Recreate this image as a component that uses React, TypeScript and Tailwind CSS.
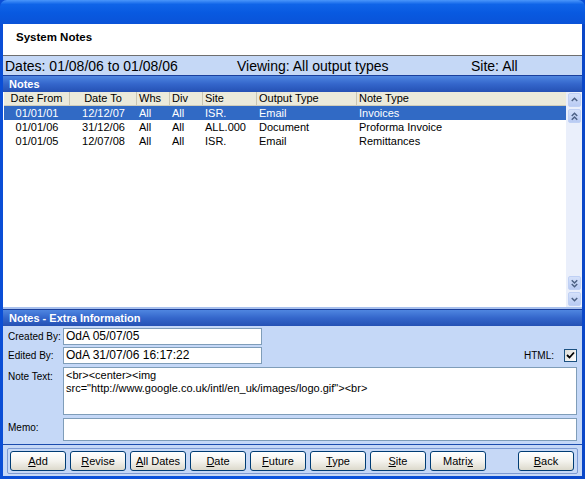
import React from 'react';

type Row = { from: string; to: string; whs: string; div: string; site: string; out: string; note: string };

const rows: Row[] = [
    { from: '01/01/01', to: '12/12/07', whs: 'All', div: 'All', site: 'ISR.', out: 'Email', note: 'Invoices' },
    { from: '01/01/06', to: '31/12/06', whs: 'All', div: 'All', site: 'ALL.000', out: 'Document', note: 'Proforma Invoice' },
    { from: '01/01/05', to: '12/07/08', whs: 'All', div: 'All', site: 'ISR.', out: 'Email', note: 'Remittances' },
];

const cols = 'grid grid-cols-[66px_67px_33px_33px_54px_100px_1fr]';

function Chevron({ dir, double }: { dir: 'up' | 'down'; double?: boolean }) {
    const one = dir === 'up' ? 'M3 7 L6 4 L9 7' : 'M3 5 L6 8 L9 5';
    return (
        <svg width="12" height={double ? 13 : 12} viewBox={double ? '0 0 12 13' : '0 0 12 12'}>
            {double ? (
                <g fill="none" stroke="#4d6185" strokeWidth="1.6">
                    <path d={dir === 'up' ? 'M3 6 L6 3 L9 6' : 'M3 3 L6 6 L9 3'} />
                    <path d={dir === 'up' ? 'M3 10 L6 7 L9 10' : 'M3 7 L6 10 L9 7'} />
                </g>
            ) : (
                <path d={one} fill="none" stroke="#4d6185" strokeWidth="1.6" />
            )}
        </svg>
    );
}

function ScrollBtn({ dir, double }: { dir: 'up' | 'down'; double?: boolean }) {
    return (
        <div className="w-[13px] h-[14px] rounded-[2px] bg-gradient-to-b from-[#d5e1fa] to-[#b9cbf3] border border-[#bfd0f4] flex items-center justify-center">
            <Chevron dir={dir} double={double} />
        </div>
    );
}

function Btn({ pre = '', u, post = '', className = '' }: { pre?: string; u: string; post?: string; className?: string }) {
    return (
        <button className={`w-[56px] h-[20px] rounded-[3px] border border-[#003c74] bg-gradient-to-b from-[#ffffff] via-[#f4f3ee] to-[#dcd9cc] text-[11px] text-black leading-none flex items-center justify-center ${className}`}>
            <span>
                {pre}
                <span className="underline underline-offset-[1px]">{u}</span>
                {post}
            </span>
        </button>
    );
}

function Bar({ title }: { title: string }) {
    return (
        <div className="h-[17px] border-t border-[#1a3f9c] bg-gradient-to-b from-[#4f86e0] via-[#3466cb] to-[#2551b4] px-[6px] flex items-center">
            <span className="text-white font-bold text-[11px] leading-none">{title}</span>
        </div>
    );
}

export default function App() {
    return (
        <div className="w-[585px] h-[479px] overflow-hidden flex flex-col font-['Liberation_Sans',Arial,sans-serif] bg-[#0a4ed6]">
            {/* title bar */}
            <div className="h-[24px] shrink-0 rounded-t-[7px] bg-[linear-gradient(to_bottom,#4a96fb,#0f64e8_18%,#0859e0_55%,#0a53d8)]" />

            <div className="flex-1 flex flex-col px-[3px] pb-[3px] bg-gradient-to-r from-[#0a4ed6] via-[#0b55df] to-[#0a47c8]">
                <div className="h-[31px] bg-white pl-[13px] pt-[7px]">
                    <div className="text-[11.5px] font-bold text-black leading-[12px]">System Notes</div>
                </div>

                <div className="h-[20px] border-t border-[#6f6f6f] bg-[#c5d8f6] flex items-center pl-[2px] text-[14px] text-black leading-none">
                    <span className="w-[232px]">Dates: 01/08/06 to 01/08/06</span>
                    <span className="w-[234px]">Viewing: All output types</span>
                    <span>Site: All</span>
                </div>

                <Bar title="Notes" />

                {/* list */}
                <div className="h-[215px] bg-white flex pl-[1px]">
                    <div className="flex-1 flex flex-col">
                        <div className={`${cols} h-[14px] bg-[#ebeadb] border-b border-[#d0cdba] text-[11px] leading-[13px] text-black`}>
                            <div className="text-center border-r border-[#c9c6b3]">Date From</div>
                            <div className="text-center border-r border-[#c9c6b3]">Date To</div>
                            <div className="pl-[2px] border-r border-[#c9c6b3]">Whs</div>
                            <div className="pl-[2px] border-r border-[#c9c6b3]">Div</div>
                            <div className="pl-[2px] border-r border-[#c9c6b3]">Site</div>
                            <div className="pl-[2px] border-r border-[#c9c6b3]">Output Type</div>
                            <div className="pl-[2px]">Note Type</div>
                        </div>
                        {rows.map((r, i) => (
                            <div
                                key={r.from}
                                className={`${cols} h-[14px] text-[11px] leading-[14px] ${i === 0 ? 'bg-[#316ac5] text-white' : 'text-black'}`}
                            >
                                <div className="text-center">{r.from}</div>
                                <div className="text-center">{r.to}</div>
                                <div className="pl-[2px]">{r.whs}</div>
                                <div className="pl-[2px]">{r.div}</div>
                                <div className="pl-[2px]">{r.site}</div>
                                <div className="pl-[2px]">{r.out}</div>
                                <div className="pl-[2px]">{r.note}</div>
                            </div>
                        ))}
                    </div>
                    <div className="w-[16px] bg-[#eaeffb] flex flex-col items-center pt-[1px] pb-[1px] gap-[2px]">
                        <ScrollBtn dir="up" />
                        <ScrollBtn dir="up" double />
                        <div className="flex-1" />
                        <ScrollBtn dir="down" double />
                        <ScrollBtn dir="down" />
                    </div>
                </div>
                <div className="h-[2px] bg-[#a9c1ee]" />

                <Bar title="Notes - Extra Information" />

                {/* extra info */}
                <div className="h-[119px] bg-[#c5d8f7] border-b border-[#1c4cae] pl-[5px] pr-[5px] pt-[2px] flex flex-col text-[10px] text-black">
                    <div className="flex items-center h-[17px]">
                        <span className="w-[55px]">Created By:</span>
                        <div className="w-[199px] h-[17px] bg-white border border-[#7f9db9] text-[12px] leading-[15px] pl-[2px]">OdA 05/07/05</div>
                    </div>
                    <div className="flex items-center h-[17px] mt-[2px]">
                        <span className="w-[55px]">Edited By:</span>
                        <div className="w-[199px] h-[17px] bg-white border border-[#7f9db9] text-[12px] leading-[15px] pl-[2px]">OdA 31/07/06 16:17:22</div>
                        <span className="ml-auto mr-[10px]">HTML:</span>
                        <div className="w-[13px] h-[13px] border border-[#1c5180] bg-gradient-to-br from-[#dcdcd7] to-white flex items-center justify-center">
                            <svg width="9" height="9" viewBox="0 0 9 9">
                                <path d="M1 4 L3.5 6.5 L8 1.5" fill="none" stroke="#000" strokeWidth="1.8" />
                            </svg>
                        </div>
                    </div>
                    <div className="flex mt-[3px]">
                        <span className="w-[55px] pt-[2px]">Note Text:</span>
                        <div className="flex-1 h-[48px] bg-white border border-[#7f9db9] text-[11px] leading-[13px] pl-[2px] pt-[1px] break-all">
                            {'<br><center><img'}
                            <br />
                            {'src="http://www.google.co.uk/intl/en_uk/images/logo.gif"><br>'}
                        </div>
                    </div>
                    <div className="flex mt-[3px]">
                        <span className="w-[55px] pt-[2px]">Memo:</span>
                        <div className="flex-1 h-[23px] bg-white border border-[#7f9db9]" />
                    </div>
                </div>

                {/* buttons */}
                <div className="h-[31px] bg-[#c6d8f6] pt-[3px] px-[4px]">
                    <div className="h-[26px] border border-[#7d9ad3] rounded-[2px] flex items-center gap-[4px] pl-[2px] pr-[3px]">
                        <Btn u="A" post="dd" />
                        <Btn u="R" post="evise" />
                        <Btn u="A" post="ll Dates" />
                        <Btn u="D" post="ate" />
                        <Btn u="F" post="uture" />
                        <Btn u="T" post="ype" />
                        <Btn u="S" post="ite" />
                        <Btn pre="Matri" u="x" />
                        <Btn u="B" post="ack" className="ml-auto" />
                    </div>
                </div>
            </div>
        </div>
    );
}
